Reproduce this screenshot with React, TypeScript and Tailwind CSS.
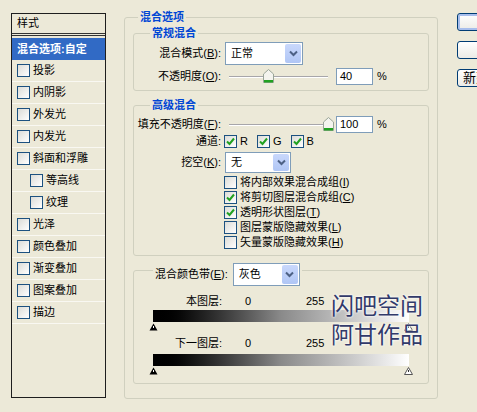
import React from 'react'

const font = "font-['Liberation_Sans','Noto_Sans_CJK_SC',sans-serif]"

function Check({ checked = false }: { checked?: boolean }) {
  return (
    <span className="w-[13px] h-[13px] shrink-0 border border-[#1C5180] bg-gradient-to-br from-[#DCDCD7] to-white flex items-center justify-center">
      {checked && (
        <svg width="9" height="9" viewBox="0 0 9 9">
          <path d="M1 4.5 L3.5 7 L8 1.5" fill="none" stroke="#21A121" strokeWidth="2" />
        </svg>
      )}
    </span>
  )
}

function Combo({ value, w, h = 23 }: { value: string; w: number; h?: number }) {
  return (
    <div
      className="border border-[#7F9DB9] bg-white flex shrink-0"
      style={{ width: w, height: h }}
    >
      <div className="flex-1 flex items-center pl-[5px]">{value}</div>
      <div className="w-[16px] m-[1px] rounded-[2px] bg-gradient-to-b from-[#C9D8FC] to-[#B0C6F5] flex items-center justify-center">
        <svg width="9" height="7" viewBox="0 0 9 7">
          <path d="M1 1.5 L4.5 5 L8 1.5" fill="none" stroke="#4D6185" strokeWidth="2" />
        </svg>
      </div>
    </div>
  )
}

function Thumb() {
  return (
    <svg width="11" height="14" viewBox="0 0 11 14">
      <path d="M0.5 5 L5.5 0.5 L10.5 5 V13.5 H0.5 Z" fill="#F4F4EE" stroke="#9AA598" />
      <rect x="1" y="11" width="9" height="2.5" fill="#21A121" />
    </svg>
  )
}

function Slider({ pos }: { pos: number }) {
  return (
    <div className="relative w-[99px] h-[17px] ml-[8px] shrink-0">
      <div className="absolute left-0 right-0 top-[8px] h-[2px] border-t border-[#A7A6AA] border-b border-b-white" />
      <div className="absolute top-[1px]" style={{ left: pos }}>
        <Thumb />
      </div>
    </div>
  )
}

function Label({ children, w = 87 }: { children: React.ReactNode; w?: number }) {
  return (
    <div className="flex justify-end whitespace-nowrap shrink-0" style={{ width: w }}>
      {children}
    </div>
  )
}

function Field({ value }: { value: string }) {
  return (
    <>
      <div className="ml-[8px] w-[37px] h-[17px] border border-[#7F9DB9] bg-white flex items-center pl-[3px]">
        {value}
      </div>
      <span className="ml-[4px]">%</span>
    </>
  )
}

function GroupTitle({ children }: { children: React.ReactNode }) {
  return (
    <span className="absolute -top-[8px] left-[16px] px-[2px] bg-[#ECE9D8] text-[#0046D5] font-bold leading-[14px]">
      {children}
    </span>
  )
}

function GradientTicks() {
  return (
    <div className="ml-[15px] w-[264px] h-[9px] mt-[1px] flex justify-between">
      <svg width="9" height="8" viewBox="0 0 9 8">
        <path d="M4.5 0.5 L8.5 7.5 H0.5 Z" fill="#000" />
        <rect x="4" y="3" width="1" height="2" fill="#fff" />
      </svg>
      <svg width="9" height="8" viewBox="0 0 9 8">
        <path d="M4.5 0.5 L8.5 7.5 H0.5 Z" fill="#fff" stroke="#555" />
        <rect x="4" y="3" width="1" height="2" fill="#333" />
      </svg>
    </div>
  )
}

const styles: [string, boolean?][] = [
  ['投影'], ['内阴影'], ['外发光'], ['内发光'], ['斜面和浮雕'], ['等高线', true], ['纹理', true],
  ['光泽'], ['颜色叠加'], ['渐变叠加'], ['图案叠加'], ['描边'],
]

const options: [React.ReactNode, boolean][] = [
  [<>将内部效果混合成组(<u>I</u>)</>, false],
  [<>将剪切图层混合成组(<u>C</u>)</>, true],
  [<>透明形状图层(<u>T</u>)</>, true],
  [<>图层蒙版隐藏效果(<u>L</u>)</>, false],
  [<>矢量蒙版隐藏效果(<u>H</u>)</>, false],
]

export default function App() {
  return (
    <div className={`relative w-[477px] h-[412px] bg-[#ECE9D8] overflow-hidden flex items-start text-[11px] text-black ${font}`}>
      {/* style list */}
      <div className="ml-[11px] mt-[13px] w-[95px] h-[385px] border border-[#1E1E1E] flex flex-col shrink-0">
        <div className="h-[20px] border-b border-[#333] flex items-center pl-[5px]">样式</div>
        <div className="h-[1px]" />
        <div className="h-[1px] bg-[#333]" />
        <div className="h-[2px]" />
        <div className="h-[22px] bg-[#316AC5] text-white font-bold flex items-center pl-[5px]">混合选项:自定</div>
        {styles.map(([name, sub]) => (
          <div
            key={name}
            className={`h-[22px] border-b border-[#F9F8F2] flex items-center gap-[3px] ${sub ? 'pl-[18px]' : 'pl-[5px]'}`}
          >
            <Check />
            <span>{name}</span>
          </div>
        ))}
      </div>

      {/* blending options */}
      <div className="relative ml-[18px] mt-[17px] w-[314px] h-[382px] border border-[#D0D0BF] rounded-[3px] px-[8px] pt-[15px] shrink-0">
        <span className="absolute -top-[8px] left-[13px] px-[2px] bg-[#ECE9D8] text-[#0046D5] font-bold leading-[14px]">混合选项</span>

        <div className="relative h-[58px] border border-[#D0D0BF] rounded-[3px] pt-[8px]">
          <GroupTitle>常规混合</GroupTitle>
          <div className="flex items-center h-[23px]">
            <Label>混合模式(<u>B</u>):</Label>
            <div className="ml-[4px]"><Combo value="正常" w={78} /></div>
          </div>
          <div className="flex items-center h-[17px] mt-[3px]">
            <Label>不透明度(<u>O</u>):</Label>
            <Slider pos={34} />
            <Field value="40" />
          </div>
        </div>

        <div className="relative mt-[14px] h-[151px] border border-[#D0D0BF] rounded-[3px] pt-[10px]">
          <GroupTitle>高级混合</GroupTitle>
          <div className="flex items-center h-[17px]">
            <Label>填充不透明度(<u>F</u>):</Label>
            <Slider pos={94} />
            <Field value="100" />
          </div>
          <div className="flex items-center h-[13px] mt-[2px]">
            <Label>通道:</Label>
            <div className="ml-[3px] flex items-center">
              <Check checked /><span className="ml-[3px]">R</span>
              <span className="ml-[9px]"><Check checked /></span><span className="ml-[3px]">G</span>
              <span className="ml-[9px]"><Check checked /></span><span className="ml-[3px]">B</span>
            </div>
          </div>
          <div className="flex items-center h-[21px] mt-[4px]">
            <Label>挖空(<u>K</u>):</Label>
            <div className="ml-[4px]"><Combo value="无" w={66} h={21} /></div>
          </div>
          <div className="mt-[2px] ml-[90px] flex flex-col">
            {options.map(([text, on], i) => (
              <div key={i} className="h-[15px] flex items-center gap-[3px]">
                <Check checked={on} />
                <span className="whitespace-nowrap">{text}</span>
              </div>
            ))}
          </div>
        </div>

        <div className="relative mt-[14px] h-[114px] border border-[#D0D0BF] rounded-[3px] pt-[23px]">
          <div className="absolute -top-[8px] left-[19px] px-[2px] bg-[#ECE9D8] flex items-center">
            <span>混合颜色带(<u>E</u>):</span>
            <div className="ml-[5px]"><Combo value="灰色" w={67} /></div>
          </div>
          <div className="flex items-center h-[14px]">
            <Label w={88}>本图层:</Label>
            <span className="ml-[23px] w-[7px]">0</span>
            <span className="ml-[54px]">255</span>
          </div>
          <div className="ml-[19px] mt-[2px] w-[256px] h-[12px] bg-gradient-to-r from-black via-[#8a8a8a] to-white" />
          <GradientTicks />
          <div className="flex items-center h-[14px] mt-[4px]">
            <Label w={88}>下一图层:</Label>
            <span className="ml-[23px] w-[7px]">0</span>
            <span className="ml-[54px]">255</span>
          </div>
          <div className="ml-[19px] mt-[4px] w-[256px] h-[12px] bg-gradient-to-r from-black via-[#8a8a8a] to-white" />
          <GradientTicks />
        </div>
      </div>

      {/* dialog buttons */}
      <div className="ml-[19px] mt-[13px] flex flex-col gap-[10px] shrink-0">
        <button className="w-[90px] h-[18px] rounded-[3px] border border-[#003C74] bg-gradient-to-b from-white to-[#ECEBE6] shadow-[inset_0_0_0_2px_#A8BEEC]">好</button>
        <button className="w-[90px] h-[18px] rounded-[3px] border border-[#003C74] bg-gradient-to-b from-white to-[#ECEBE6]">取消</button>
        <button className="w-[90px] h-[18px] rounded-[3px] border border-[#003C74] bg-gradient-to-b from-white to-[#ECEBE6] text-left pl-[5px] whitespace-nowrap text-[13px] leading-[16px]">新建样式(W)...</button>
      </div>

      {/* watermark */}
      <div className="absolute left-[331px] top-[292px] text-[23px] leading-[29px] text-[#323A6A] [text-shadow:0_0_3px_#fff,0_0_2px_#fff]">
        <div>闪吧空间</div>
        <div>阿甘作品</div>
      </div>
    </div>
  )
}
